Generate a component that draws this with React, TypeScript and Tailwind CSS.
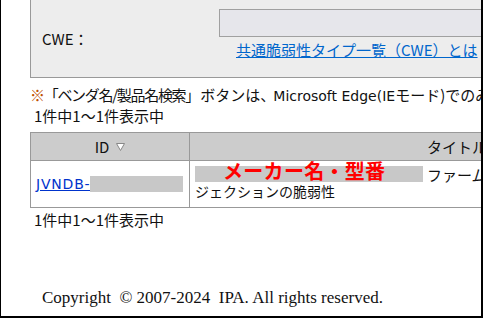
import React from "react";

const jp = { fontFamily: '"Noto Sans CJK JP", "Noto Sans", sans-serif' };
const dv = { fontFamily: '"DejaVu Sans", "Noto Sans CJK JP", sans-serif' };

export default function App() {
  return (
    <div className="w-[483px] h-[318px] overflow-hidden bg-white border-l border-r-2 border-b-2 border-black box-border text-[#111]" style={jp}>
      <div className="pl-[29px] text-[14px] leading-none">
        {/* CWE panel */}
        <div className="h-[78px] w-[600px] bg-[#ededed] border-l border-b border-[#999] flex">
          <div className="w-[188px] pl-[11px] pt-[31px] text-[15px]">CWE：</div>
          <div className="flex flex-col">
            <div className="mt-[9px] w-[400px] h-[28px] bg-[#e6e6eb] border border-[#a0a0a0]" />
            <a className="mt-[5px] ml-[17px] text-[#0066cc] underline text-[15px] whitespace-nowrap">共通脆弱性タイプ一覧（CWE）とは</a>
          </div>
        </div>
        <div className="mt-[9px] whitespace-nowrap text-[15px] h-[16px]">
          <span className="tracking-[-1.3px]">
            <span className="text-[#c05000]">※</span>「ベンダ名/製品名検索
          </span>
          」ボタンは<span className="tracking-[-2px]">、</span>
          <span className="text-[14px]" style={dv}>Microsoft Edge(IE</span>モード)でのみ
        </div>
        <div className="mt-[5px] pl-[4px] text-[15px] h-[18px]">1件中1～1件表示中</div>
        {/* table */}
        <div className="mt-[6px] w-[694px] border border-[#999] border-r-0">
          <div className="flex h-[27px] bg-[#cccccc] border-b border-[#999] box-content">
            <div className="w-[159px] border-r border-[#999] flex items-center justify-center gap-[7px] text-[15px]">
              <span>ID</span>
              <svg width="9" height="8" viewBox="0 0 9 8">
                <path d="M0.5 0.5 H8.5 L4.5 7.5 Z" fill="#fff" stroke="#888" strokeWidth="1" />
              </svg>
            </div>
            <div className="flex-1 flex items-center justify-center text-[15px]">
              <span>タイトル</span>
            </div>
          </div>
          <div className="flex h-[46px]">
            <div className="w-[159px] border-r border-[#999] flex items-center pl-[5px] pb-[1px]">
              <span className="text-[#0033cc] underline text-[14px] tracking-[0.8px]" style={dv}>JVNDB-</span>
              <span className="w-[93px] h-[16px] bg-[#c8c8c8]" />
            </div>
            <div className="flex-1 pl-[5px] pt-[5px] text-[14px]">
              <div className="flex items-center h-[16px]">
                <div className="relative w-[228px] h-[16px] bg-[#c8c8c8]">
                  <span className="absolute left-[28px] top-[-5px] text-[20px] font-bold text-[#ff0000] whitespace-nowrap leading-none tracking-[0.3px]">メーカー名・型番</span>
                </div>
                <span className="ml-[4px] text-[15px]">ファームウェアにおけるOSコマンドイン</span>
              </div>
              <div className="mt-[2px] text-[14px]">ジェクションの脆弱性</div>
            </div>
          </div>
        </div>
        <div className="mt-[4px] pl-[4px] text-[15px]">1件中1～1件表示中</div>
        <div className="mt-[62px] pl-[12px] text-[17px] whitespace-nowrap" style={{ fontFamily: '"Liberation Serif", serif' }}>
          Copyright&nbsp; ©&nbsp;2007-2024&nbsp; IPA. All rights reserved.
        </div>
      </div>
    </div>
  );
}
